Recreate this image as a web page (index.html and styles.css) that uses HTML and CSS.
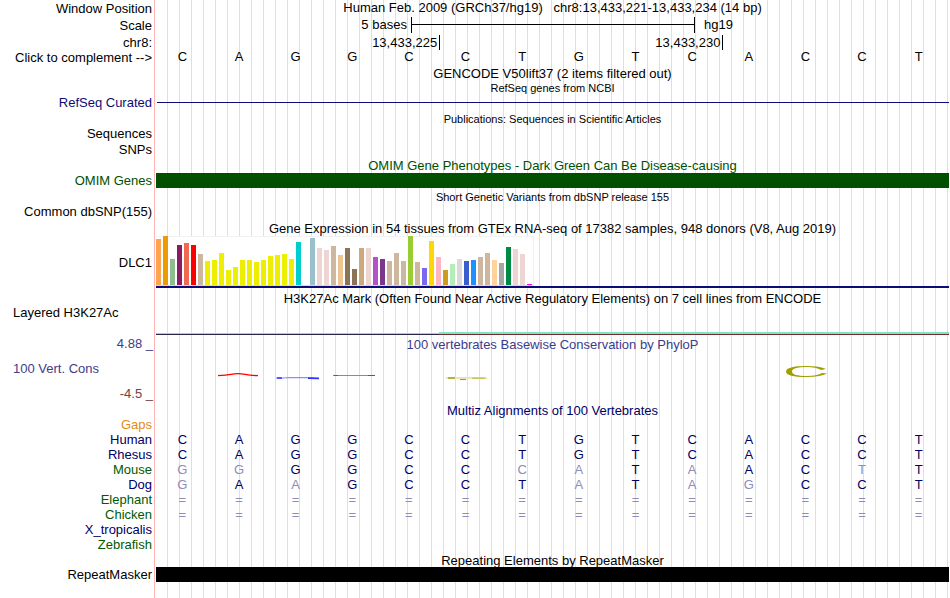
FILE: index.html
```html
<!DOCTYPE html>
<html lang="en">
<head>
<meta charset="utf-8">
<title>Genome Browser - chr8:13,433,221-13,433,234</title>
<link rel="stylesheet" href="styles.css">
</head>
<body>
<main class="browser">
  <header class="position">
    <div class="row head"><div class="label">Window Position</div><h1 class="title">Human Feb. 2009 (GRCh37/hg19) &nbsp; chr8:13,433,221-13,433,234 (14 bp)</h1></div>
    <div class="row head"><div class="label">Scale</div><div class="scale"><span class="span-name">5 bases</span><span class="span-bar"></span><span class="assembly">hg19</span></div></div>
    <div class="row head"><div class="label">chr8:</div><div class="ruler"><span>13,433,225</span><span>13,433,230</span></div></div>
    <div class="row head"><div class="label">Click to complement --&gt;</div><div class="bases"><span>C</span><span>A</span><span>G</span><span>G</span><span>C</span><span>C</span><span>T</span><span>G</span><span>T</span><span>C</span><span>A</span><span>C</span><span>C</span><span>T</span></div></div>
  </header>

  <section class="row gencode"><h2 class="title">GENCODE V50lift37 (2 items filtered out)</h2></section>

  <section class="refseq">
    <div class="row"><h2 class="title small">RefSeq genes from NCBI</h2></div>
    <div class="row"><div class="label navy">RefSeq Curated</div><div class="intron"></div></div>
  </section>

  <section class="pubs">
    <div class="row"><h2 class="title small">Publications: Sequences in Scientific Articles</h2></div>
    <div class="row"><div class="label">Sequences</div></div>
    <div class="row snps"><div class="label">SNPs</div></div>
  </section>

  <section class="omim">
    <div class="row"><h2 class="title green">OMIM Gene Phenotypes - Dark Green Can Be Disease-causing</h2></div>
    <div class="row"><div class="label green">OMIM Genes</div><div class="block block-green"></div></div>
  </section>

  <section class="dbsnp">
    <div class="row"><h2 class="title small">Short Genetic Variants from dbSNP release 155</h2></div>
    <div class="row"><div class="label">Common dbSNP(155)</div></div>
  </section>

  <section class="gtex">
    <div class="row"><h2 class="title">Gene Expression in 54 tissues from GTEx RNA-seq of 17382 samples, 948 donors (V8, Aug 2019)</h2></div>
    <div class="row">
      <div class="label middle">DLC1</div>
      <div class="gene">
        <div class="bars">
          <i style="height:46px;background:#ffa54f"></i><i style="height:49px;background:#ee9a00"></i><i style="height:26px;background:#8fbc8f"></i><i style="height:40px;background:#8b1c62"></i><i style="height:42px;background:#ee6a50"></i><i style="height:40px;background:#ff0000"></i><i style="height:31px;background:#cdb79e"></i><i style="height:24px;background:#eeee00"></i><i style="height:25px;background:#eeee00"></i><i style="height:32px;background:#eeee00"></i><i style="height:15px;background:#eeee00"></i><i style="height:18px;background:#eeee00"></i><i style="height:25px;background:#eeee00"></i><i style="height:25px;background:#eeee00"></i><i style="height:23px;background:#eeee00"></i><i style="height:25px;background:#eeee00"></i><i style="height:29px;background:#eeee00"></i><i style="height:30px;background:#eeee00"></i><i style="height:31px;background:#eeee00"></i><i style="height:26px;background:#eeee00"></i><i style="height:43px;background:#00cdcd"></i><i style="height:0;background:#ee82ee"></i><i style="height:47px;background:#9ac0cd"></i><i style="height:37px;background:#eed5d2"></i><i style="height:35px;background:#eed5d2"></i><i style="height:39px;background:#cdb79e"></i><i style="height:30px;background:#eec591"></i><i style="height:37px;background:#8b7355"></i><i style="height:16px;background:#8b7355"></i><i style="height:37px;background:#cdaa7d"></i><i style="height:37px;background:#eed5d2"></i><i style="height:28px;background:#b452cd"></i><i style="height:26px;background:#7a378b"></i><i style="height:24px;background:#cdb79e"></i><i style="height:32px;background:#cdb79e"></i><i style="height:24px;background:#cdb79e"></i><i style="height:49px;background:#9acd32"></i><i style="height:23px;background:#cdb79e"></i><i style="height:17px;background:#7b68ee"></i><i style="height:44px;background:#ffd700"></i><i style="height:28px;background:#ffb6c1"></i><i style="height:15px;background:#cd9b1d"></i><i style="height:21px;background:#b4eeb4"></i><i style="height:26px;background:#d9d9d9"></i><i style="height:24px;background:#3a5fcd"></i><i style="height:25px;background:#1e90ff"></i><i style="height:28px;background:#cdb79e"></i><i style="height:32px;background:#cdb79e"></i><i style="height:25px;background:#ffd39b"></i><i style="height:22px;background:#a6a6a6"></i><i style="height:38px;background:#008b45"></i><i style="height:36px;background:#eed5d2"></i><i style="height:31px;background:#eed5d2"></i><i style="height:1px;background:#ff00ff"></i>
        </div>
      </div>
    </div>
  </section>

  <section class="h3k">
    <div class="row"><h2 class="title">H3K27Ac Mark (Often Found Near Active Regulatory Elements) on 7 cell lines from ENCODE</h2></div>
    <div class="row signal-row"><div class="label left">Layered H3K27Ac</div><div class="signal"><span class="low"></span><span class="high"></span></div></div>
  </section>

  <section class="row phylop">
    <div class="axis"><span class="blue">4.88 _</span><span class="name blue">100 Vert. Cons</span><span class="brown">-4.5 _</span></div>
    <div class="cons">
      <h2 class="title blue">100 vertebrates Basewise Conservation by PhyloP</h2>
      <svg class="logo" viewBox="0 0 793 20" preserveAspectRatio="none" aria-hidden="true">
        <path d="M62 11.6 Q70 11.5 75 10.4 Q82 9 89 10.4 Q94 11.5 102 11.6" fill="none" stroke="#f00" stroke-width="1.3"/>
        <path d="M120 14 H127 L134 13.6 H150 L163 14.2" fill="none" stroke="#8c8cff" stroke-width="1.2"/>
        <path d="M121 14 H126 M152 14.1 L163 14.5" fill="none" stroke="#33f" stroke-width="1.6"/>
        <path d="M177 11.5 H219" fill="none" stroke="#8282dc"/>
        <path d="M178 11.5 H182 M212 11.5 H219" fill="none" stroke="#5050c8"/>
        <path d="M290 14 H331" fill="none" stroke="#e6e6b8" stroke-width="2"/>
        <path d="M292 14 H299" fill="none" stroke="#b4b43c" stroke-width="2"/>
        <path d="M316 14.2 H329" fill="none" stroke="#c0c050" stroke-width="1.3"/>
        <path d="M304 15.5 H310" fill="none" stroke="#0e0"/>
        <path d="M670 4.9 L665 5.9 Q660 3 651 3 Q636 3 636 7.5 Q636 12 651 12 Q661 12 666 9 L671 9.6 Q665 13 651 13 Q630 13 630 7.5 Q630 2 651 2 Q664 2 670 4.9Z" fill="#a0a000"/>
      </svg>
    </div>
  </section>

  <section class="multiz">
    <div class="row"><h2 class="title deep">Multiz Alignments of 100 Vertebrates</h2></div>
    <table>
      <tbody>
      <tr class="gaps"><th scope="row">Gaps</th></tr>
      <tr><th scope="row">Human</th><td>C</td><td>A</td><td>G</td><td>G</td><td>C</td><td>C</td><td>T</td><td>G</td><td>T</td><td>C</td><td>A</td><td>C</td><td>C</td><td>T</td></tr>
      <tr><th scope="row">Rhesus</th><td>C</td><td>A</td><td>G</td><td>G</td><td>C</td><td>C</td><td>T</td><td>G</td><td>T</td><td>C</td><td>A</td><td>C</td><td>C</td><td>T</td></tr>
      <tr class="alt"><th scope="row">Mouse</th><td class="m">G</td><td class="m">G</td><td>G</td><td>G</td><td>C</td><td>C</td><td class="m">C</td><td class="m">A</td><td>T</td><td class="m">A</td><td>A</td><td>C</td><td class="m">T</td><td>T</td></tr>
      <tr><th scope="row">Dog</th><td class="m">G</td><td>A</td><td class="m">A</td><td>G</td><td>C</td><td>C</td><td>T</td><td class="m">A</td><td>T</td><td class="m">A</td><td class="m">G</td><td>C</td><td>C</td><td>T</td></tr>
      <tr class="alt none"><th scope="row">Elephant</th><td>=</td><td>=</td><td>=</td><td>=</td><td>=</td><td>=</td><td>=</td><td>=</td><td>=</td><td>=</td><td>=</td><td>=</td><td>=</td><td>=</td></tr>
      <tr class="alt none"><th scope="row">Chicken</th><td>=</td><td>=</td><td>=</td><td>=</td><td>=</td><td>=</td><td>=</td><td>=</td><td>=</td><td>=</td><td>=</td><td>=</td><td>=</td><td>=</td></tr>
      <tr><th scope="row">X_tropicalis</th></tr>
      <tr class="alt"><th scope="row">Zebrafish</th></tr>
      </tbody>
    </table>
  </section>

  <section class="repeats">
    <div class="row"><h2 class="title">Repeating Elements by RepeatMasker</h2></div>
    <div class="row"><div class="label">RepeatMasker</div><div class="block block-black"></div></div>
  </section>
</main>
</body>
</html>
```
FILE: styles.css
```css
body {
  margin: 0;
  background: #fff;
  color: #000;
  font: 13px/15px "Liberation Sans", Arial, sans-serif;
}

.browser {
  min-height: 100vh;
  box-sizing: border-box;
  padding-right: 1px;
  /* pink divider after the labels, then a guide line every 12px */
  background:
    linear-gradient(#ffb4b4, #ffb4b4) 154px 0 / 1px 100% no-repeat,
    repeating-linear-gradient(to right, #dcdcfa 0 1px, transparent 1px 12px) 167px 0 / 100% 100% no-repeat;
}

.row,
tr {
  display: grid;
  grid-template-columns: 156px minmax(0, 1fr);
}

.row > * { grid-row: 1; }
.row > :not(.label):not(.axis) { grid-column: 2; }

.label { padding-right: 4px; text-align: right; white-space: nowrap; }
.label.left { padding-left: 13px; text-align: left; }
.label.middle { align-self: center; }

.title {
  margin: 0;
  font-size: 13px;
  font-weight: normal;
  text-align: center;
  white-space: nowrap;
}
.title.small { font-size: 11px; line-height: 13px; }

.navy { color: #0c0c78; }
.green { color: #005000; }
.blue { color: #3c3c8c; }
.brown { color: #783c3c; }
.deep { color: #000064; }

/* position header */
.head { min-height: 16px; }
.head .label { align-self: end; }
.head + .head { padding-top: 1px; }
.head:last-child { margin-top: -1px; padding: 0 0 1px; }

.scale { display: grid; grid-template-columns: 4.5fr 5fr 4.5fr; }
.span-name { padding-right: 4px; text-align: right; }
.span-bar {
  margin-right: -1px;
  border: solid #000;
  border-width: 0 1px;
  background: linear-gradient(#000, #000) 0 7px / 100% 1px no-repeat;
}
.assembly { padding-left: 10px; }

.ruler { display: grid; grid-template-columns: 5fr 5fr 4fr; align-items: end; }
.ruler span {
  margin-right: -1px;
  padding-right: 2px;
  border-right: 1px solid #000;
  text-align: right;
}

.bases { display: grid; grid-template-columns: repeat(14, 1fr); }
.bases span { padding-right: 4px; text-align: center; }

.gencode { padding-bottom: 1px; }

/* tracks */
.intron { align-self: center; height: 1px; margin-left: 1px; background: #0c0c78; }
.pubs { padding-top: 3px; }
.snps { padding: 1px 0; }
.block { height: 15px; }
.block-green { background: #005000; }
.block-black { background: #000; }
.dbsnp { padding: 3px 0 2px; }

.gene { border-bottom: 2px solid #0c0c78; }
.bars {
  display: flex;
  align-items: flex-end;
  gap: 2px;
  width: 376px;
  height: 48px;
  padding-right: 1px;
  border: solid #f2f2f2;
  border-width: 1px 1px 1px 0;
  border-bottom-color: #d8d8d8;
  background: #fff;
}
.bars i { flex: none; width: 5px; }

.h3k { padding-top: 3px; }
.signal-row { margin-top: -1px; }
.signal { display: grid; grid-template-columns: 5fr 9fr; align-items: end; height: 30px; }
.low { height: 1px; border-top: 1px solid #78e6c8; background: #28284c; }
.high { height: 1px; border-top: 2px solid #78e6c8; background: #782828; }

.phylop { padding-top: 1px; }
.axis { display: flex; flex-direction: column; gap: 10px; padding-right: 3px; text-align: right; }
.axis .name { padding-left: 13px; text-align: left; }
.cons .title { padding-top: 1px; }
.logo { display: block; width: 100%; height: 20px; margin-top: 12px; }

/* alignment table */
.multiz { padding-top: 2px; }
table { display: block; margin-top: -1px; }
tbody { display: block; }
tr { grid-template-columns: 156px repeat(14, minmax(0, 1fr)); color: #000064; }
th { padding: 0 4px 0 0; font-weight: normal; text-align: right; }
td { padding: 0 4px 0 0; text-align: center; }
.alt th { color: #005a00; }
.gaps th { color: #e68a14; }
.m, .none td { color: #8c8cb9; }

.repeats { padding-top: 1px; }
.repeats .row + .row { margin-top: -1px; }
```
